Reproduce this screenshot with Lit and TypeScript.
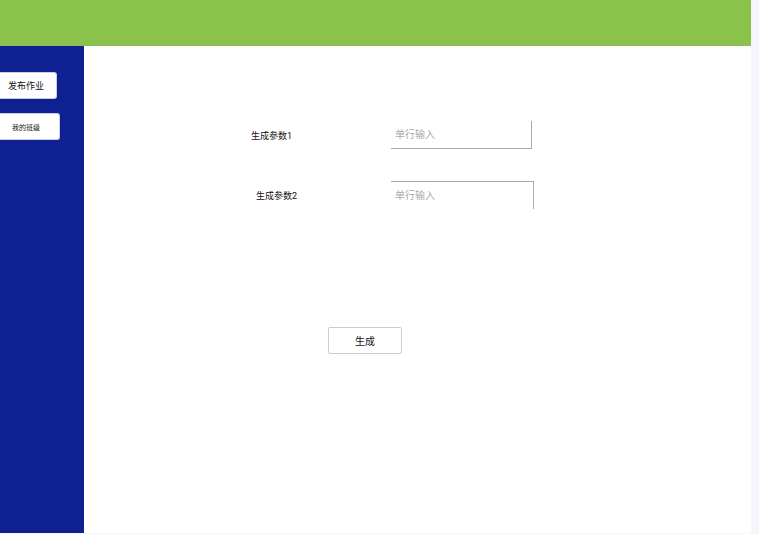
import { LitElement, html, css } from "lit";
import { customElement } from "lit/decorators.js";

@customElement("app-root")
export class AppRoot extends LitElement {
  static styles = css`
    :host {
      display: block;
      box-sizing: border-box;
      min-height: 100vh;
      padding: 0 8px 1px 0;
      background: #f5f5fb;
      font-family: Roboto, "Noto Sans CJK SC", sans-serif;
      color: #111;
    }
    * {
      box-sizing: border-box;
    }
    .page {
      display: grid;
      grid-template: 46px 1fr / 84px 1fr;
      min-height: calc(100vh - 1px);
      background: #fff;
    }
    .header {
      grid-column: 1 / -1;
      background: #8bc34a;
      border-bottom: 1px solid #8fb866;
    }
    .sidebar {
      display: flex;
      flex-direction: column;
      align-items: flex-start;
      gap: 14px;
      padding-top: 26px;
      background: #0f2192;
    }
    button,
    input {
      margin: 0;
      font-family: inherit;
      color: inherit;
      background: #fff;
    }
    .nav {
      width: 57px;
      height: 27px;
      padding: 0 0 0 8px;
      border: 1px solid #c9cde4;
      border-left: 0;
      border-radius: 0 3px 3px 0;
      font-size: 9px;
      white-space: nowrap;
      text-align: left;
    }
    .nav.small {
      width: 60px;
      padding-left: 12px;
      font-size: 7px;
    }
    .form {
      padding: 75px 24px 24px 167px;
    }
    .row {
      display: flex;
      align-items: center;
      height: 28px;
      margin-bottom: 32px;
    }
    .label {
      flex: none;
      width: 140px;
      font-size: 9px;
    }
    .label.inset {
      padding-left: 5px;
    }
    .field {
      width: 141px;
      height: 28px;
      padding: 0 4px;
      border: 0 solid #aaa;
      border-right-width: 1px;
      border-radius: 0;
      font-size: 10px;
    }
    .field::placeholder {
      color: #aaa;
      opacity: 1;
    }
    .field.bottom {
      border-bottom-width: 1px;
    }
    .field.top {
      width: 143px;
      border-top-width: 1px;
    }
    .submit {
      display: block;
      width: 74px;
      height: 27px;
      margin: 118px 0 0 77px;
      padding: 0;
      border: 1px solid #ccc;
      border-radius: 2px;
      font-size: 10px;
    }
  `;

  render() {
    return html`
      <div class="page">
        <header class="header"></header>
        <nav class="sidebar">
          <button class="nav" type="button">发布作业</button>
          <button class="nav small" type="button">我的班级</button>
        </nav>
        <main>
          <form class="form">
            <div class="row">
              <label class="label" for="p1">生成参数1</label>
              <input class="field bottom" id="p1" type="text" placeholder="单行输入" />
            </div>
            <div class="row">
              <label class="label inset" for="p2">生成参数2</label>
              <input class="field top" id="p2" type="text" placeholder="单行输入" />
            </div>
            <button class="submit" type="button">生成</button>
          </form>
        </main>
      </div>
    `;
  }
}
